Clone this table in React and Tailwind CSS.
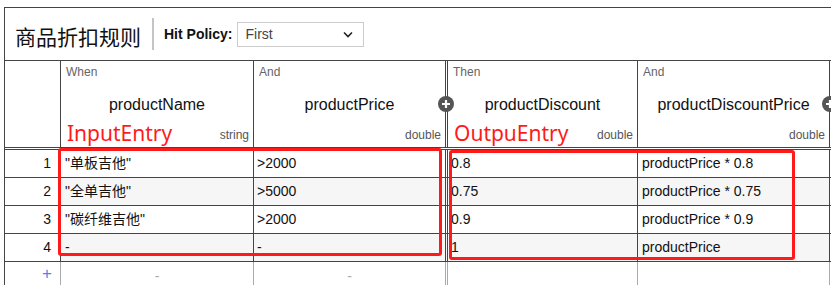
import React from 'react';

const FONT = "font-['Liberation_Sans','Noto_Sans_CJK_SC',sans-serif]";

const COLS = [
  { w: 'w-[56px]', b: 'border-r' },
  { w: 'w-[193px]', b: 'border-r' },
  { w: 'w-[194px]', b: 'border-r-[3px] border-double' },
  { w: 'w-[190px]', b: 'border-r' },
  { w: 'w-[192px]', b: 'border-r' },
];

const headers = [
  { kind: 'When', name: 'productName', type: 'string', note: 'InputEntry' },
  { kind: 'And', name: 'productPrice', type: 'double' },
  { kind: 'Then', name: 'productDiscount', type: 'double', note: 'OutpuEntry' },
  { kind: 'And', name: 'productDiscountPrice', type: 'double' },
];

const rules = [
  ['"单板吉他"', '>2000', '0.8', 'productPrice * 0.8'],
  ['"全单吉他"', '>5000', '0.75', 'productPrice * 0.75'],
  ['"碳纤维吉他"', '>2000', '0.9', 'productPrice * 0.9'],
  ['-', '-', '1', 'productPrice'],
];

const pads = ['pl-[4px]', 'pl-[3px]', 'pl-[3px]', 'pl-[4px]'];

function PlusBadge({ className }) {
  return (
    <div className={`absolute z-10 w-[16px] h-[16px] rounded-full bg-[#555] flex items-center justify-center ${className}`}>
      <svg width="10" height="10" viewBox="0 0 10 10">
        <path d="M5 1v8M1 5h8" stroke="#fff" strokeWidth="2.2" />
      </svg>
    </div>
  );
}

export default function App() {
  return (
    <div className={`w-[831px] h-[285px] overflow-hidden bg-white pt-[7px] pl-[4px] ${FONT}`}>
      <div className="relative w-[827px] border-t border-l border-[#444]">
        {/* title bar */}
        <div className="h-[53px] border-b border-[#444] flex items-center pl-[10px]">
          <div className="mt-[4px] text-[21px] leading-[28px] text-[#111] font-['Noto_Sans_CJK_SC',sans-serif]">商品折扣规则</div>
          <div className="ml-[11px] w-[2px] h-[32px] bg-[#c4c4c4]" />
          <div className="ml-[10px] text-[14px] font-bold text-[#111]">Hit Policy:</div>
          <div className="ml-[5px] w-[127px] h-[25px] border border-[#ccc] flex items-center justify-between pl-[7px] pr-[10px] text-[14px] text-[#444]">
            <span>First</span>
            <svg width="10" height="7" viewBox="0 0 10 7">
              <path d="M1 1.5l4 4 4-4" fill="none" stroke="#222" strokeWidth="1.6" />
            </svg>
          </div>
        </div>

        {/* header */}
        <div className="flex h-[89px] border-b-[3px] border-double border-[#444]">
          <div className={`${COLS[0].w} ${COLS[0].b} border-[#444]`} />
          {headers.map((h, i) => (
            <div key={i} className={`${COLS[i + 1].w} ${COLS[i + 1].b} border-[#444] flex flex-col pt-[3px] pb-[4px]`}>
              <div className="pl-[5px] text-[12px] leading-[16px] text-[#666]">{h.kind}</div>
              <div className="mt-[15px] text-center text-[16px] leading-[20px] text-[#111]">{h.name}</div>
              <div className="mt-auto flex items-end justify-between pl-[6px] pr-[4px]">
                <span className="text-[21px] leading-[20px] text-[#ff1a1a] font-['Noto_Sans',sans-serif]">{h.note || ''}</span>
                <span className="text-[12px] leading-[16px] text-[#555]">{h.type}</span>
              </div>
            </div>
          ))}
        </div>

        {/* rules */}
        {rules.map((r, ri) => (
          <div key={ri} className="flex h-[28px] border-b border-[#444] text-[14px] text-[#111]">
            <div className={`${COLS[0].w} ${COLS[0].b} border-[#444] flex items-center justify-end pr-[9px]`}>{ri + 1}</div>
            {r.map((c, ci) => (
              <div
                key={ci}
                className={`${COLS[ci + 1].w} ${COLS[ci + 1].b} border-[#444] flex items-center ${pads[ci]} ${ri % 2 === 1 ? 'bg-[#f6f6f6]' : 'bg-white'}`}
              >
                {c}
              </div>
            ))}
          </div>
        ))}

        {/* add row */}
        <div className="flex h-[24px] text-[14px]">
          <div className={`${COLS[0].w} ${COLS[0].b} border-[#aaa] flex items-center justify-end pr-[8px] text-[#4a86f0] text-[17px]`}>+</div>
          <div className={`${COLS[1].w} ${COLS[1].b} border-[#aaa] flex items-center justify-center pt-[4px] text-[#aaa]`}>-</div>
          <div className={`${COLS[2].w} ${COLS[2].b} border-[#aaa] flex items-center justify-center pt-[4px] text-[#aaa]`}>-</div>
          <div className={`${COLS[3].w} ${COLS[3].b} border-[#aaa]`} />
          <div className={`${COLS[4].w} ${COLS[4].b} border-[#aaa]`} />
        </div>

        {/* overlays */}
        <PlusBadge className="left-[433px] top-[88px]" />
        <PlusBadge className="left-[817px] top-[88px]" />
        <div className="absolute left-[53px] top-[140px] w-[384px] h-[108px] border-[3px] border-[#ff1a1a] rounded-[3px] pointer-events-none" />
        <div className="absolute left-[444px] top-[142px] w-[346px] h-[110px] border-[3px] border-[#ff1a1a] rounded-[3px] pointer-events-none" />
      </div>
    </div>
  );
}
